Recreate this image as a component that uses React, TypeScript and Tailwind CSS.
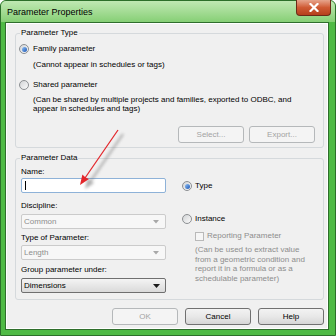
import React from "react";

function Radio({ checked }: { checked?: boolean }) {
  return (
    <span className="flex h-[10px] w-[10px] shrink-0 items-center justify-center rounded-full border border-[#8c8f92] bg-gradient-to-br from-[#d2d4d6] to-[#fbfbfb]">
      {checked && (
        <span className="h-[5px] w-[5px] rounded-full bg-gradient-to-br from-[#8fc0f5] to-[#1c56b3]" />
      )}
    </span>
  );
}

function DisabledButton({ label, w }: { label: string; w: string }) {
  return (
    <div
      className={`flex h-[17px] ${w} items-center justify-center rounded-[3px] border border-[#b5b8ba] bg-[#f4f4f4] text-[#a3a3a3]`}
    >
      {label}
    </div>
  );
}

function Button({ label }: { label: string }) {
  return (
    <div className="flex h-[17px] w-[66px] items-center justify-center rounded-[3px] border border-[#707070] bg-gradient-to-b from-[#f3f3f3] via-[#e8e8e8] to-[#d6d6d6] text-black">
      {label}
    </div>
  );
}

function Combo({ value, disabled }: { value: string; disabled?: boolean }) {
  return disabled ? (
    <div className="flex h-[15px] w-[145px] items-center justify-between rounded-[2px] border border-[#cbcbcb] bg-[#f7f7f7] pl-[2px] pr-[6px] text-[#8d8d8d]">
      <span>{value}</span>
      <svg width="6" height="4" viewBox="0 0 6 4">
        <path d="M0 0 L6 0 L3 3.5 Z" fill="#a8a8a8" />
      </svg>
    </div>
  ) : (
    <div className="flex h-[15px] w-[145px] items-center justify-between rounded-[2px] border border-[#6f6f6f] bg-gradient-to-b from-[#f4f4f4] to-[#dadada] pl-[2px] pr-[5px] text-black">
      <span>{value}</span>
      <svg width="7" height="4" viewBox="0 0 7 4">
        <path d="M0 0 L7 0 L3.5 4 Z" fill="#1a1a1a" />
      </svg>
    </div>
  );
}

export default function App() {
  return (
    <div className="relative h-[336px] w-[336px] overflow-hidden bg-white font-['Liberation_Sans',Arial,sans-serif] text-[8px] leading-[10px]">
      <div className="flex h-[336px] w-[336px] flex-col rounded-t-[6px] border border-[#2c6f2a] bg-[#4fba45]">
        {/* title bar */}
        <div className="flex h-[21px] shrink-0 items-start rounded-t-[5px] bg-gradient-to-b from-[#bfe8b3] via-[#a4dc95] to-[#86cf75]">
          <div className="pl-[6px] pt-[6px] text-[9px] leading-[10px] text-black">Parameter Properties</div>
          <div className="flex-1" />
          <div className="-mt-[1px] mr-[4px] flex h-[16px] w-[35px] items-center justify-center rounded-b-[4px] border border-t-0 border-[#6b2a17] bg-gradient-to-b from-[#e6a48c] via-[#cf5a33] to-[#b5401c]">
            <svg width="10" height="9" viewBox="0 0 10 9">
              <path d="M1.5 1 L8.5 8 M8.5 1 L1.5 8" stroke="#ffffff" strokeWidth="2.2" strokeLinecap="square" />
            </svg>
          </div>
        </div>
        {/* body */}
        <div className="mb-[5px] ml-[4px] mr-[6px] flex-1 border border-[#2f6e2c] bg-[#4fba45]">
          <div className="flex h-full flex-col border border-white bg-[#f0f0f0] text-black">
            {/* Parameter Type group */}
            <fieldset className="ml-[8px] mr-[3px] mt-[4px] rounded-[3px] border border-[#d5d9dc] pb-[4px] pl-[3px] pr-[8px]">
              <legend className="ml-[1px] px-[1px] leading-[10px]">Parameter Type</legend>
              <div className="mt-[6px] flex h-[10px] items-center gap-[4px]">
                <Radio checked />
                <span>Family parameter</span>
              </div>
              <div className="mt-[6px] pl-[14px]">(Cannot appear in schedules or tags)</div>
              <div className="mt-[10px] flex h-[10px] items-center gap-[4px]">
                <Radio />
                <span>Shared parameter</span>
              </div>
              <div className="mt-[5px] pl-[14px] leading-[9px]">
                <div>(Can be shared by multiple projects and families, exported to ODBC, and</div>
                <div>appear in schedules and tags)</div>
              </div>
              <div className="mt-[13px] flex justify-end gap-[5px]">
                <DisabledButton label="Select..." w="w-[66px]" />
                <DisabledButton label="Export..." w="w-[66px]" />
              </div>
            </fieldset>
            {/* Parameter Data group */}
            <fieldset className="ml-[8px] mr-[3px] mt-[5px] flex rounded-[3px] border border-[#d5d9dc] pb-[6px] pl-[5px]">
              <legend className="ml-[-1px] px-[1px] leading-[10px]">Parameter Data</legend>
              <div className="flex">
                <div className="flex w-[145px] flex-col">
                  <div className="mt-[4px]">Name:</div>
                  <div className="mt-[1px] flex h-[15px] w-[145px] items-center rounded-[2px] border border-[#8eb2d8] bg-white pl-[3px]">
                    <span className="h-[9px] w-[1px] bg-black" />
                  </div>
                  <div className="mt-[8px]">Discipline:</div>
                  <div className="mt-[3px]">
                    <Combo value="Common" disabled />
                  </div>
                  <div className="mt-[4px]">Type of Parameter:</div>
                  <div className="mt-[2px]">
                    <Combo value="Length" disabled />
                  </div>
                  <div className="mt-[5px]">Group parameter under:</div>
                  <div className="mt-[3px]">
                    <Combo value="Dimensions" />
                  </div>
                </div>
                <div className="ml-[16px] flex flex-col">
                  <div className="mt-[18px] flex h-[10px] items-center gap-[3px]">
                    <Radio checked />
                    <span>Type</span>
                  </div>
                  <div className="mt-[23px] flex h-[10px] items-center gap-[3px]">
                    <Radio />
                    <span>Instance</span>
                  </div>
                  <div className="mt-[7px] flex h-[10px] items-center gap-[3px] pl-[13px] text-[#8d8d8d]">
                    <span className="h-[9px] w-[9px] border border-[#b9b9b9] bg-[#f6f6f6]" />
                    <span>Reporting Parameter</span>
                  </div>
                  <div className="mt-[4px] pl-[13px] leading-[9.5px] text-[#8d8d8d]">
                    <div>(Can be used to extract value</div>
                    <div>from a geometric condition and</div>
                    <div>report it in a formula or as a</div>
                    <div>schedulable parameter)</div>
                  </div>
                </div>
              </div>
            </fieldset>
            {/* bottom buttons */}
            <div className="mr-[3px] mt-[8px] flex justify-end gap-[7px]">
              <DisabledButton label="OK" w="w-[66px]" />
              <Button label="Cancel" />
              <Button label="Help" />
            </div>
          </div>
        </div>
      </div>
      {/* red annotation arrow */}
      <svg className="pointer-events-none absolute left-0 top-0" width="336" height="336" viewBox="0 0 336 336">
        <defs>
          <filter id="blur" x="-50%" y="-50%" width="200%" height="200%">
            <feGaussianBlur stdDeviation="1.6" />
          </filter>
        </defs>
        <g transform="translate(5 4)" filter="url(#blur)" opacity="0.55">
          <path d="M118 130 L85 178" stroke="#6f6f6f" strokeWidth="2" />
          <path d="M80 185 L89 179 L82.4 174.5 Z" fill="#6f6f6f" />
        </g>
        <path d="M118 130 L85 178" stroke="#e3262b" strokeWidth="1.3" />
        <path d="M80 185 L89 179 L85.5 177.5 L82.4 174.5 Z" fill="#e3262b" />
      </svg>
    </div>
  );
}
